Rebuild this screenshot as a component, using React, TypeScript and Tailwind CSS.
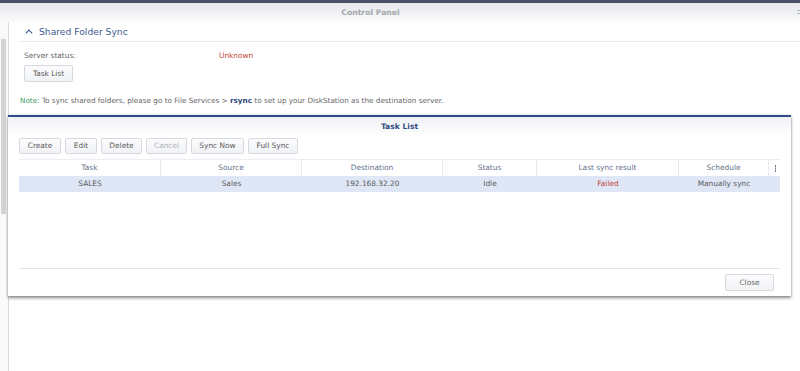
import React from 'react';

const font = { fontFamily: '"DejaVu Sans", Verdana, sans-serif' };

const columns = [
  { key: 'task', label: 'Task' },
  { key: 'source', label: 'Source' },
  { key: 'dest', label: 'Destination' },
  { key: 'status', label: 'Status' },
  { key: 'result', label: 'Last sync result' },
  { key: 'schedule', label: 'Schedule' },
];

const rows = [
  {
    id: 'sales',
    task: 'SALES',
    source: 'Sales',
    dest: '192.168.32.20',
    status: 'Idle',
    result: 'Failed',
    schedule: 'Manually sync',
  },
];

const ToolButton: React.FC<{ label: string; width: string; disabled?: boolean }> = ({
  label,
  width,
  disabled,
}) => (
  <button
    className={`${width} h-[16px] flex items-center justify-center rounded-[2px] border border-[#d6dae0] bg-gradient-to-b from-[#fcfcfd] to-[#f0f2f5] text-[7.4px] leading-none ${
      disabled ? 'text-[#b0b3b8]' : 'text-[#5a5a5a]'
    }`}
  >
    {label}
  </button>
);

const TaskListDialog: React.FC = () => (
  <div className="absolute left-[8px] top-[115px] w-[783px] h-[181px] flex flex-col bg-white border-t-2 border-[#2f4d84] shadow-[0_2px_3px_rgba(0,0,0,0.45),0_0_2px_rgba(0,0,0,0.15)]">
    <div className="h-[19px] flex items-center justify-center bg-gradient-to-b from-[#eef0f4] to-[#ffffff]">
      <span className="text-[7.6px] font-bold text-[#2f4d84]">Task List</span>
    </div>
    <div className="flex-1 flex flex-col px-[11px] pt-[2px]">
      <div className="flex gap-[4px]">
        <ToolButton label="Create" width="w-[42px]" />
        <ToolButton label="Edit" width="w-[32px]" />
        <ToolButton label="Delete" width="w-[41px]" />
        <ToolButton label="Cancel" width="w-[41px]" disabled />
        <ToolButton label="Sync Now" width="w-[53px]" />
        <ToolButton label="Full Sync" width="w-[50px]" />
      </div>

      <div className="mt-[5px] h-[110px] border-b border-[#e2e4e7] flex flex-col">
        <div className="grid grid-cols-[142px_141px_141px_94px_142px_90px_10px] h-[17px] border-t border-[#eceef1] text-[7.4px] text-[#62718a]">
          {columns.map((c) => (
            <div key={c.key} className="flex items-center justify-center border-r border-[#e9ebee]">
              {c.label}
            </div>
          ))}
          <div className="flex items-center justify-end pr-[2px]">
            <svg width="3" height="7" viewBox="0 0 3 7">
              <rect x="1" y="0" width="1" height="2" fill="#6b7a92" />
              <rect x="1" y="2.5" width="1" height="2" fill="#6b7a92" />
              <rect x="1" y="5" width="1" height="2" fill="#6b7a92" />
            </svg>
          </div>
        </div>
        {rows.map((r) => (
          <div
            key={r.id}
            className="grid grid-cols-[142px_141px_141px_94px_142px_90px_10px] h-[16px] bg-[#dfe7f6] text-[7.4px] text-[#5a5a5a]"
          >
            <div className="flex items-center justify-center">{r.task}</div>
            <div className="flex items-center justify-center">{r.source}</div>
            <div className="flex items-center justify-center">{r.dest}</div>
            <div className="flex items-center justify-center">{r.status}</div>
            <div className="flex items-center justify-center text-[#c4473a]">{r.result}</div>
            <div className="flex items-center justify-center">{r.schedule}</div>
            <div />
          </div>
        ))}
      </div>

      <div className="flex justify-end pr-[6px] mt-[5px]">
        <button className="w-[49px] h-[17px] flex items-center justify-center rounded-[2px] border border-[#d6dae0] bg-gradient-to-b from-[#fcfcfd] to-[#f0f2f5] text-[7.4px] text-[#666]">
          Close
        </button>
      </div>
    </div>
  </div>
);

export default function App() {
  return (
    <div className="relative w-[800px] h-[371px] overflow-hidden bg-white" style={font}>
      <div className="h-[3px] bg-[#4a5466]" />
      <div className="h-[19px] flex items-center justify-center pr-[59px] bg-gradient-to-b from-[#e6e8ec] to-[#fbfbfc] relative">
        <span className="text-[7.7px] font-bold text-[#a3a7ad]">Control Panel</span>
        <div className="absolute right-0 top-[7px] flex flex-col gap-[2px]">
          <div className="w-[3px] h-[1px] bg-[#b5b8bd]" />
          <div className="w-[3px] h-[1px] bg-[#b5b8bd]" />
        </div>
      </div>

      <div className="flex h-[349px]">
        <div className="w-[9px] border-r border-[#dcdcdc] bg-[#fafafa]">
          <div className="ml-[1px] mt-[17px] w-[5px] h-[175px] bg-[#d3d3d3]" />
        </div>

        <div className="flex-1 flex flex-col">
          <div className="ml-[10px] h-[20px] flex items-center pl-[6px] border-b border-dotted border-[#d4d7dc]">
            <svg width="8" height="5" viewBox="0 0 8 5" className="mr-[6px]">
              <path d="M0.8 4.3 L4 1.1 L7.2 4.3" fill="none" stroke="#3d5b8b" strokeWidth="1.1" />
            </svg>
            <span className="text-[9.2px] text-[#3d5b8b]">Shared Folder Sync</span>
          </div>

          <div className="ml-[15px] mt-[9px] flex text-[7.4px] leading-[9px]">
            <span className="w-[195px] text-[#666]">Server status:</span>
            <span className="text-[#c4473a]">Unknown</span>
          </div>

          <div className="ml-[15px] mt-[5px]">
            <button className="w-[49px] h-[17px] flex items-center justify-center rounded-[2px] border border-[#d6dae0] bg-gradient-to-b from-[#fcfcfd] to-[#f0f2f5] text-[7.4px] text-[#5a5a5a]">
              Task List
            </button>
          </div>

          <div className="ml-[11px] mt-[14px] text-[7.25px] leading-[9px] text-[#666]">
            <span className="text-[#3f9a63]">Note:</span> To sync shared folders, please go to File Services &gt;{' '}
            <span className="font-bold text-[#2c4a7e]">rsync</span> to set up your DiskStation as the destination
            server.
          </div>
        </div>
      </div>

      <TaskListDialog />
    </div>
  );
}
